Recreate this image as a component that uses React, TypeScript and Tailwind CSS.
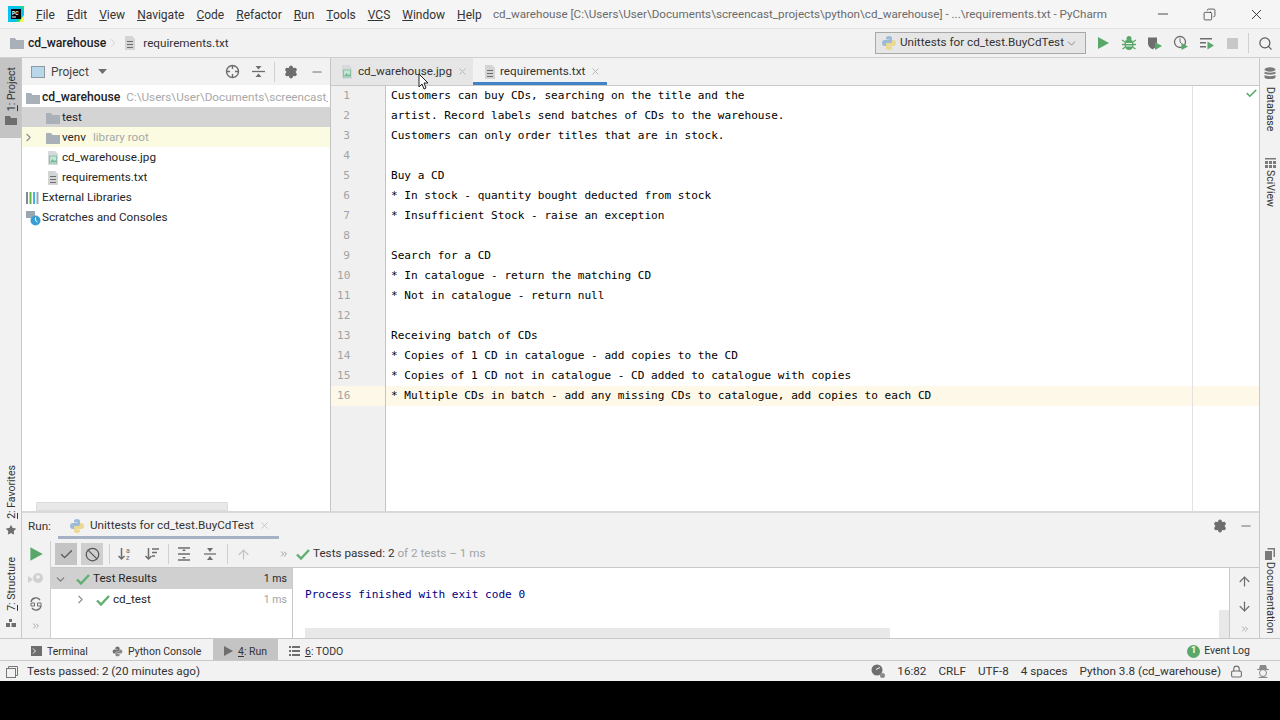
import { Minus, X, Copy, Search, ChevronDown, ChevronRight, Settings, ArrowUp, ArrowDown, ChevronsRight, Ban, Check, Star, Lock } from "lucide-react";

const ui = "font-['Roboto','Liberation_Sans',sans-serif]";
const mono = "font-['DejaVu_Sans_Mono','Liberation_Mono',monospace]";

const requirementLines = [
  "Customers can buy CDs, searching on the title and the",
  "artist. Record labels send batches of CDs to the warehouse.",
  "Customers can only order titles that are in stock.",
  "",
  "Buy a CD",
  "* In stock - quantity bought deducted from stock",
  "* Insufficient Stock - raise an exception",
  "",
  "Search for a CD",
  "* In catalogue - return the matching CD",
  "* Not in catalogue - return null",
  "",
  "Receiving batch of CDs",
  "* Copies of 1 CD in catalogue - add copies to the CD",
  "* Copies of 1 CD not in catalogue - CD added to catalogue with copies",
  "* Multiple CDs in batch - add any missing CDs to catalogue, add copies to each CD",
];

const menuItems: [string, string][] = [
  ["F", "ile"],
  ["E", "dit"],
  ["V", "iew"],
  ["N", "avigate"],
  ["C", "ode"],
  ["R", "efactor"],
  ["R", "un"],
  ["T", "ools"],
  ["VC", "S"],
  ["W", "indow"],
  ["H", "elp"],
];

function FolderIcon({ size = 16 }: { size?: number }) {
  return (
    <svg width={size} height={size} viewBox="0 0 16 16" className="shrink-0">
      <path d="M1 3h5l1.500 2H15v9H1z" fill="#aab0b8" />
    </svg>
  );
}

function TextFileIcon() {
  return (
    <svg width="16" height="16" viewBox="0 0 16 16" className="shrink-0">
      <path d="M3 1h7l3 3v11H3z" fill="#d2d4d6" />
      <path d="M5 6h6v1H5zM5 9h6v1H5zM5 12h6v1H5z" fill="#6e6e6e" />
    </svg>
  );
}

function ImageFileIcon() {
  return (
    <svg width="16" height="16" viewBox="0 0 16 16" className="shrink-0">
      <path d="M3 1h7l3 3v11H3z" fill="#d6dadb" />
      <rect x="4.500" y="6" width="7" height="7" fill="#c5e6d6" stroke="#8abfa3" />
      <path d="M5 12l2.500-3 2 2 1.500-1v2z" fill="#7cb894" />
    </svg>
  );
}

function PythonIcon() {
  return (
    <svg width="16" height="16" viewBox="0 0 16 16" className="shrink-0">
      <path d="M8 1C5.500 1 5 2 5 3v1.500h3.500V5H3.500C2 5 1 6 1 8s1 3 2.500 3H5V9.500C5 8.500 6 8 7 8h3c1 0 1-1 1-1.500V3c0-1-1-2-3-2z" fill="#9dbbd8" />
      <path d="M8 15c2.500 0 3-1 3-2v-1.500H7.500V11h5c1.500 0 2.500-1 2.500-3s-1-3-2.500-3H11v1.500C11 7.500 10 8 9 8H6c-1 0-1 1-1 1.500V13c0 1 1 2 3 2z" fill="#ecd98f" />
    </svg>
  );
}

function RunTriangle({ size = 16 }: { size?: number }) {
  return (
    <svg width={size} height={size} viewBox="0 0 16 16" className="shrink-0">
      <path d="M3 2l11 6-11 6z" fill="#59a869" />
    </svg>
  );
}

function PassCheck() {
  return (
    <svg width="14" height="12" viewBox="0 0 14 12" className="shrink-0">
      <path d="M1 6.500l4 4L13 2" fill="none" stroke="#5fb06f" strokeWidth="2.400" />
    </svg>
  );
}

function Divider({ className }: { className?: string }) {
  return <div className={`h-[20px] w-px shrink-0 bg-[#d0d0d0] ${className ?? ""}`} />;
}

function RailLabel({ num, label }: { num: string; label: string }) {
  return (
    <span className="ml-[2px] shrink-0 rotate-180 text-[10.500px] leading-[16px] text-[#333] [writing-mode:vertical-rl]">
      <u>{num}</u>
      {label}
    </span>
  );
}

function SideLabel({ label, className }: { label: string; className: string }) {
  return <span className={`shrink-0 text-[10.500px] leading-[16px] text-[#333] [writing-mode:vertical-rl] ${className}`}>{label}</span>;
}

function TreeRow({ indent, className, children }: { indent: number; className?: string; children: React.ReactNode }) {
  return (
    <div className={`flex h-[20px] items-center whitespace-nowrap pt-[1px] text-[11.700px] text-[#262626] ${className ?? ""}`} style={{ paddingLeft: indent }}>
      {children}
    </div>
  );
}

function EditorTab({ icon, name, active }: { icon: React.ReactNode; name: string; active?: boolean }) {
  return (
    <div className={`flex h-[27px] items-center text-[11.700px] text-[#333] ${active ? "w-[134px] border-b-[3px] border-[#4083c9] bg-[#f2f2f2] pl-[9px] pt-[3px]" : "w-[142px] bg-[#e6e6e6] pl-[8px]"}`}>
      {icon}
      <span className={`whitespace-nowrap pt-[1px] ${active ? "ml-[2px] w-[90px]" : "ml-[3px] w-[99px]"}`}>{name}</span>
      <X size={11} className="shrink-0 text-[#b5b5b5]" />
    </div>
  );
}

function BottomTab({ icon, num, label, className }: { icon: React.ReactNode; num?: string; label: string; className?: string }) {
  return (
    <div className={`flex h-full items-center whitespace-nowrap pt-[3px] text-[10.500px] text-[#333] ${className ?? ""}`}>
      {icon}
      <span className="ml-[5px] pt-[1px]">
        {num && <u>{num}</u>}
        {label}
      </span>
    </div>
  );
}

export default function App() {
  return (
    <div className={`relative flex h-[720px] w-[1280px] flex-col overflow-hidden bg-black ${ui}`}>
      <div className="flex h-[681px] flex-col bg-[#f2f2f2]">
        {/* title bar */}
        <div className="flex h-[29px] shrink-0 items-center border-b border-[#e2e2e2] bg-[#f5f5f5] pl-[8px] text-[12px] text-[#333]">
          <svg width="16" height="16" viewBox="0 0 16 16" className="shrink-0">
            <rect width="16" height="16" fill="#21d789" />
            <path d="M0 0h11l5 5v5L6 16H0z" fill="#07c3f2" />
            <path d="M11 16h5V9z" fill="#fcf84a" />
            <rect x="3" y="3" width="10" height="10" fill="#000" />
            <text x="4" y="8.500" fontSize="5" fontWeight="700" fill="#fff">PC</text>
            <rect x="4" y="10.500" width="4" height="1" fill="#fff" />
          </svg>
          <div className="ml-[12px] flex w-[457px] gap-[12px] whitespace-nowrap pt-[1px]">
            {menuItems.map(([head, rest], i) => (
              <span key={i}>
                <u>{head}</u>
                {rest}
              </span>
            ))}
          </div>
          <span className="whitespace-nowrap pt-[1px] text-[11.650px] text-[#6b6b6b]">
            cd_warehouse [C:\Users\User\Documents\screencast_projects\python\cd_warehouse] - ...\requirements.txt - PyCharm
          </span>
          <div className="ml-auto flex items-center gap-[32px] pr-[15px] text-[#222]">
            <Minus size={16} strokeWidth={1.200} />
            <Copy size={13} strokeWidth={1.300} className="-scale-x-100" />
            <X size={17} strokeWidth={1.200} />
          </div>
        </div>

        {/* navigation bar */}
        <div className="flex h-[29px] shrink-0 items-center border-b border-[#cfcfcf] pl-[9px] text-[11.700px] text-[#333]">
          <FolderIcon />
          <span className="ml-[3px] text-[12.200px] font-medium text-[#222]">cd_warehouse</span>
          <ChevronRight size={14} strokeWidth={1} className="text-[#c0c0c0]" />
          <span className="ml-[2px]">
            <TextFileIcon />
          </span>
          <span className="ml-[5px] pt-[2px]">requirements.txt</span>
          <div className="ml-auto flex items-center pr-[7px]">
            <div className="flex h-[22px] w-[211px] items-center border border-[#a8a8a8] bg-[#e6e6e6] pl-[5px] pr-[4px]">
              <PythonIcon />
              <span className="ml-[3px] whitespace-nowrap">Unittests for cd_test.BuyCdTest</span>
              <ChevronDown size={13} strokeWidth={1.200} className="ml-auto mr-[3px] text-[#555]" />
            </div>
            <div className="ml-[9px] flex items-center gap-[10px]">
              <RunTriangle />
              <svg width="16" height="16" viewBox="0 0 16 16">
                <ellipse cx="8" cy="9.500" rx="4.500" ry="5.500" fill="#59a869" />
                <circle cx="8" cy="3.500" r="2.500" fill="#59a869" />
                <path d="M1 5l3 2M15 5l-3 2M1 9.500h3M15 9.500h-3M1.500 14l3-2M14.500 14l-3-2" stroke="#59a869" strokeWidth="1.300" />
                <path d="M5 8.500h6M5 11h6" stroke="#f2f2f2" />
              </svg>
              <svg width="16" height="16" viewBox="0 0 16 16">
                <path d="M1 2.500h9v6c0 3-3 5-4.500 6C4 13.500 1 11.500 1 8.500z" fill="#6e6e6e" />
                <path d="M8 7l7 4-7 4z" fill="#59a869" />
              </svg>
              <svg width="16" height="16" viewBox="0 0 16 16">
                <circle cx="7" cy="7" r="5.500" fill="none" stroke="#6e6e6e" strokeWidth="1.300" />
                <path d="M7 3.500V7l2 2" fill="none" stroke="#6e6e6e" />
                <path d="M8.500 8l6.500 3.500-6.500 3.500z" fill="#59a869" />
              </svg>
              <svg width="16" height="16" viewBox="0 0 16 16">
                <path d="M1 3h12v1.500H1zM1 7h6v1.500H1zM1 11h6v1.500H1z" fill="#6e6e6e" />
                <path d="M8.500 6.500l6.500 4-6.500 4z" fill="#59a869" />
              </svg>
              <div className="mx-[2px] h-[11px] w-[11px] bg-[#c8c8c8]" />
            </div>
            <Divider className="ml-[8px] mr-[9px]" />
            <Search size={15} strokeWidth={2} className="text-[#5a5a5a]" />
          </div>
        </div>

        {/* workspace */}
        <div className="flex min-h-0 flex-1">
          {/* left rail */}
          <div className="flex w-[22px] shrink-0 flex-col items-center border-r border-[#c9c9c9]">
            <div className="flex h-[80px] w-full shrink-0 flex-col items-center gap-[5px] bg-[#c4c4c4] pt-[9px]">
              <RailLabel num="1" label=": Project" />
              <svg width="12" height="9" viewBox="0 0 12 9" className="shrink-0">
                <path d="M0 0h5l1 2h6v7H0z" fill="#6e6e6e" />
              </svg>
            </div>
            <div className="mt-[327px] flex shrink-0 flex-col items-center gap-[5px]">
              <RailLabel num="2" label=": Favorites" />
              <Star size={12} fill="#6e6e6e" strokeWidth={0} className="shrink-0" />
            </div>
            <div className="mt-[21px] flex shrink-0 flex-col items-center gap-[8px]">
              <RailLabel num="7" label=": Structure" />
              <svg width="10" height="8" viewBox="0 0 10 8" className="shrink-0">
                <path d="M3 0h3v3H3zM0 4h4v4H0zM5.500 4H10v4H5.500z" fill="#6e6e6e" />
              </svg>
            </div>
          </div>

          {/* center */}
          <div className="flex min-w-0 flex-1 flex-col">
            <div className="flex h-[453px] shrink-0">
              {/* project tool window */}
              <div className="flex w-[309px] shrink-0 flex-col border-r border-[#c4c4c4] bg-white">
                <div className="flex h-[27px] shrink-0 items-center bg-[#f2f2f2] pl-[9px] pr-[6px] text-[12px] text-[#444]">
                  <svg width="14" height="14" viewBox="0 0 14 14">
                    <rect x="0.500" y="1.500" width="13" height="11" fill="#b9d7ea" stroke="#8e9aa3" />
                  </svg>
                  <span className="ml-[6px]">Project</span>
                  <svg width="9" height="5" viewBox="0 0 9 5" className="ml-[9px]">
                    <path d="M0 0h9L4.500 5z" fill="#6e6e6e" />
                  </svg>
                  <div className="ml-auto flex items-center text-[#6e6e6e]">
                    <svg width="15" height="15" viewBox="0 0 15 15">
                      <circle cx="7.500" cy="7.500" r="6" fill="none" stroke="#6e6e6e" strokeWidth="1.400" />
                      <path d="M7.500 1v4M7.500 10v4M1 7.500h4M10 7.500h4" stroke="#6e6e6e" strokeWidth="1.400" />
                    </svg>
                    <svg width="13" height="13" viewBox="0 0 13 13" className="ml-[12px]">
                      <path d="M0 6.500h13" stroke="#6e6e6e" strokeWidth="1.300" />
                      <path d="M3.500 1h6L6.500 4.500zM3.500 12h6L6.500 8.500z" fill="#6e6e6e" />
                    </svg>
                    <Divider className="ml-[9px]" />
                    <Settings size={14} fill="#6e6e6e" strokeWidth={2} className="ml-[9px]" />
                    <Minus size={14} strokeWidth={2} className="ml-[12px]" />
                  </div>
                </div>
                <div className="relative min-h-0 flex-1 pt-[2px]">
                  <TreeRow indent={3}>
                    <FolderIcon />
                    <span className="ml-[1px] text-[12.200px] font-medium text-[#222]">cd_warehouse</span>
                    <span className="ml-[6px] w-[202px] overflow-hidden text-[#a8a8a8]">C:\Users\User\Documents\screencast_p</span>
                  </TreeRow>
                  <TreeRow indent={23} className="bg-[#d4d4d4]">
                    <FolderIcon />
                    <span className="ml-[1px]">test</span>
                  </TreeRow>
                  <TreeRow indent={0} className="bg-[#fbfbe2]">
                    <ChevronRight size={13} strokeWidth={2} className="mr-[10px] text-[#8c8c8c]" />
                    <FolderIcon />
                    <span className="ml-[1px]">venv</span>
                    <span className="ml-[7px] text-[#a8a8a8]">library root</span>
                  </TreeRow>
                  <TreeRow indent={23}>
                    <ImageFileIcon />
                    <span className="ml-[1px]">cd_warehouse.jpg</span>
                  </TreeRow>
                  <TreeRow indent={23}>
                    <TextFileIcon />
                    <span className="ml-[1px]">requirements.txt</span>
                  </TreeRow>
                  <TreeRow indent={3}>
                    <svg width="16" height="14" viewBox="0 0 16 14" className="shrink-0">
                      <path d="M1 1h2v12H1z" fill="#7f8b91" />
                      <path d="M4.500 1h2v12h-2z" fill="#62b543" />
                      <path d="M8 1h2v12H8z" fill="#40b6e0" />
                      <path d="M11.500 1h2v12h-2z" fill="#9aa7b0" />
                    </svg>
                    <span className="ml-[1px]">External Libraries</span>
                  </TreeRow>
                  <TreeRow indent={3}>
                    <svg width="16" height="16" viewBox="0 0 16 16" className="shrink-0">
                      <path d="M1 1h9v7H1z" fill="#9aa7b0" />
                      <circle cx="10.500" cy="10.500" r="5" fill="#389fd6" />
                      <path d="M10.500 7.500v3l2 1.500" fill="none" stroke="#fff" />
                    </svg>
                    <span className="ml-[1px]">Scratches and Consoles</span>
                  </TreeRow>
                  <div className="absolute bottom-0 left-[14px] h-[9px] w-[192px] border border-[#dcdcdc] bg-[#e8e8e8]" />
                </div>
              </div>

              {/* editor */}
              <div className="flex min-w-0 flex-1 flex-col">
                <div className="flex h-[28px] shrink-0 border-b border-[#c9c9c9]">
                  <EditorTab icon={<ImageFileIcon />} name="cd_warehouse.jpg" />
                  <EditorTab icon={<TextFileIcon />} name="requirements.txt" active />
                </div>
                <div className="flex min-h-0 flex-1 bg-white">
                  <div className={`w-[55px] shrink-0 border-r border-[#c4c4c4] bg-[#f0f0f0] text-[11.080px] leading-[20px] text-[#a3a3a3] ${mono}`}>
                    {requirementLines.map((_, i) => (
                      <div key={i} className={`h-[20px] pl-[6px] ${i === 15 ? "bg-[#fdf8e8]" : ""}`}>
                        <span className="inline-block w-[13px] text-right">{i + 1}</span>
                      </div>
                    ))}
                  </div>
                  <div className={`relative min-w-0 flex-1 text-[11.080px] leading-[20px] text-black ${mono}`}>
                    {requirementLines.map((line, i) => (
                      <div key={i} className={`h-[20px] whitespace-pre pl-[5px] ${i === 15 ? "bg-[#fdf8e8]" : ""}`}>
                        {line}
                      </div>
                    ))}
                    <div className="absolute bottom-0 left-[806px] top-0 w-px bg-[#e2e2e2]" />
                    <Check size={13} strokeWidth={3} className="absolute right-[1px] top-[1px] text-[#59a869]" />
                  </div>
                </div>
              </div>
            </div>

            {/* run tool window */}
            <div className="flex h-[127px] shrink-0 flex-col border-t-[2px] border-[#d9d9d9]">
              <div className="flex h-[28px] shrink-0 items-start pl-[6px] pr-[6px] text-[11.700px] text-[#333]">
                <span className="mt-[5px]">Run:</span>
                <div className="ml-[7px] flex h-[26px] w-[221px] items-center border-b-[3px] border-[#a5b2c4] pl-[11px] pt-[2px]">
                  <PythonIcon />
                  <span className="ml-[5px] whitespace-nowrap">Unittests for cd_test.BuyCdTest</span>
                  <X size={11} className="ml-[5px] text-[#c2c2c2]" />
                </div>
                <div className="ml-auto mt-[6px] flex items-center gap-[12px] text-[#6e6e6e]">
                  <Settings size={14} fill="#6e6e6e" />
                  <Minus size={14} strokeWidth={2} />
                </div>
              </div>
              <div className="flex min-h-0 flex-1">
                <div className="flex w-[29px] shrink-0 flex-col items-center gap-[9px] border-r border-[#d0d0d0] pt-[4px] text-[#8a8a8a]">
                  <RunTriangle size={18} />
                  <svg width="16" height="15" viewBox="0 0 16 15" className="shrink-0">
                    <path d="M0 4l5 3.500L0 11z" fill="#d0d0d0" />
                    <circle cx="10" cy="6" r="5" fill="#d0d0d0" />
                    <circle cx="10" cy="5" r="1.800" fill="#f2f2f2" />
                  </svg>
                  <svg width="16" height="16" viewBox="0 0 16 16" className="shrink-0">
                    <path d="M3 6a5 5 0 0 1 9-2M13 10a5 5 0 0 1-9 2" fill="none" stroke="#6e6e6e" strokeWidth="1.300" />
                    <path d="M3 7h3.500v3H3zM9.500 7H13v3H9.500z" fill="none" stroke="#6e6e6e" />
                  </svg>
                  <ChevronsRight size={10} className="shrink-0 text-[#999]" />
                </div>
                <div className="flex min-w-0 flex-1 flex-col">
                  <div className="flex h-[27px] shrink-0 items-center border-b border-[#c9c9c9] pl-[4px] text-[11.700px]">
                    <div className="flex h-[22px] w-[22px] items-center justify-center bg-[#c4c4c4]">
                      <Check size={15} strokeWidth={2} className="text-[#555]" />
                    </div>
                    <div className="ml-[4px] flex h-[22px] w-[22px] items-center justify-center bg-[#cfcfcf]">
                      <Ban size={15} strokeWidth={2} className="text-[#555]" />
                    </div>
                    <Divider className="ml-[6px]" />
                    <div className="ml-[7px] flex items-center gap-[11px]">
                      <svg width="16" height="16" viewBox="0 0 16 16">
                        <path d="M4.500 2v11M1.500 10l3 3 3-3" fill="none" stroke="#6e6e6e" strokeWidth="1.500" />
                        <text x="9" y="7" fontSize="7" fill="#6e6e6e">a</text>
                        <text x="9" y="14" fontSize="7" fill="#6e6e6e">z</text>
                      </svg>
                      <svg width="16" height="16" viewBox="0 0 16 16">
                        <path d="M4.500 2v11M1.500 10l3 3 3-3" fill="none" stroke="#6e6e6e" strokeWidth="1.500" />
                        <path d="M8 3h7M8 6.500h5M8 10h3" stroke="#6e6e6e" strokeWidth="1.300" />
                      </svg>
                    </div>
                    <Divider className="ml-[8px]" />
                    <div className="ml-[7px] flex items-center gap-[10px]">
                      <svg width="16" height="16" viewBox="0 0 16 16">
                        <path d="M2 2h12M2 14h12M2 8h12" stroke="#6e6e6e" strokeWidth="1.300" />
                        <path d="M6 5h4L8 3zM6 11h4l-2 2z" fill="#6e6e6e" />
                      </svg>
                      <svg width="16" height="16" viewBox="0 0 16 16">
                        <path d="M2 8h12" stroke="#6e6e6e" strokeWidth="1.300" />
                        <path d="M5 2h6L8 6zM5 14h6l-3-4z" fill="#6e6e6e" />
                      </svg>
                    </div>
                    <Divider className="ml-[9px]" />
                    <ArrowUp size={15} strokeWidth={2} className="ml-[8px] text-[#c4c4c4]" />
                    <ChevronsRight size={10} className="ml-[28px] text-[#888]" />
                    <div className="ml-[7px] flex items-center gap-[3px] whitespace-nowrap text-[#333]">
                      <PassCheck />
                      <span>
                        Tests passed: 2 <span className="text-[#a3a3a3]">of 2 tests – 1 ms</span>
                      </span>
                    </div>
                  </div>
                  <div className="flex min-h-0 flex-1">
                    <div className="w-[242px] shrink-0 border-r border-[#c9c9c9] bg-white text-[11.700px]">
                      <div className="flex h-[21px] items-center bg-[#d0d0d0] pl-[3px] pr-[5px] pt-[1px] text-[#262626]">
                        <ChevronDown size={13} strokeWidth={2} className="text-[#777]" />
                        <span className="ml-[9px]">
                          <PassCheck />
                        </span>
                        <span className="ml-[3px]">Test Results</span>
                        <span className="ml-auto text-[10.500px]">1 ms</span>
                      </div>
                      <div className="flex h-[20px] items-center pl-[23px] pr-[5px] pt-[1px] text-[#262626]">
                        <ChevronRight size={13} strokeWidth={2} className="text-[#8c8c8c]" />
                        <span className="ml-[9px]">
                          <PassCheck />
                        </span>
                        <span className="ml-[3px]">cd_test</span>
                        <span className="ml-auto text-[10.500px] text-[#a3a3a3]">1 ms</span>
                      </div>
                    </div>
                    <div className={`relative min-w-0 flex-1 bg-white pl-[12px] pt-[17px] text-[11.080px] leading-[20px] text-[#000080] ${mono}`}>
                      Process finished with exit code 0
                      <div className="absolute bottom-0 left-[12px] h-[10px] w-[585px] bg-[#e8e8e8]" />
                      <div className="absolute bottom-0 right-0 h-[28px] w-[10px] bg-[#e8e8e8]" />
                    </div>
                    <div className="flex w-[30px] shrink-0 flex-col items-center gap-[10px] border-l border-[#c9c9c9] pt-[6px] text-[#6e6e6e]">
                      <ArrowUp size={15} strokeWidth={2} className="shrink-0" />
                      <ArrowDown size={15} strokeWidth={2} className="shrink-0" />
                      <ChevronsRight size={10} className="shrink-0 text-[#999]" />
                    </div>
                  </div>
                </div>
              </div>
            </div>
          </div>

          {/* right rail */}
          <div className="flex w-[21px] shrink-0 flex-col items-center border-l border-[#c9c9c9] pt-[9px]">
            <svg width="12" height="13" viewBox="0 0 12 13" className="shrink-0">
              <ellipse cx="6" cy="2.500" rx="5.500" ry="2.200" fill="#7a7a7a" />
              <path d="M.5 4.500c1 1.500 10 1.500 11 0v2c-1 1.500-10 1.500-11 0zM.5 8c1 1.500 10 1.500 11 0v2.500c-1 2-10 2-11 0z" fill="#7a7a7a" />
            </svg>
            <SideLabel label="Database" className="mt-[7px]" />
            <svg width="11" height="10" viewBox="0 0 11 10" className="mt-[27px] shrink-0">
              <path d="M0 0h11v1.500H0zM0 3h3v3H0zM4 3h3v3H4zM8 3h3v3H8zM0 7h3v3H0zM4 7h3v3H4zM8 7h3v3H8z" fill="#7a7a7a" />
            </svg>
            <SideLabel label="SciView" className="mt-[2px]" />
            <svg width="10" height="12" viewBox="0 0 10 12" className="mt-[341px] shrink-0">
              <path d="M2.500 0H10v9H8.500V1.500h-6zM0 3h7v9H0z" fill="#7a7a7a" />
            </svg>
            <SideLabel label="Documentation" className="mt-[2px]" />
          </div>
        </div>

        {/* tool window bar */}
        <div className="flex h-[23px] shrink-0 items-center border-y border-[#c9c9c9] pr-[30px]">
          <BottomTab
            className="ml-[31px] w-[81px]"
            icon={
              <svg width="11" height="10" viewBox="0 0 11 10">
                <rect width="11" height="10" fill="#6e6e6e" />
                <path d="M2 2.500L4.500 5 2 7.500" fill="none" stroke="#f2f2f2" />
              </svg>
            }
            label="Terminal"
          />
          <BottomTab
            className="w-[101px]"
            icon={
              <svg width="11" height="11" viewBox="0 0 16 16">
                <path d="M8 1C5.500 1 5 2 5 3v1.500h3.500V5H3.500C2 5 1 6 1 8s1 3 2.500 3H5V9.500C5 8.500 6 8 7 8h3c1 0 1-1 1-1.500V3c0-1-1-2-3-2z" fill="#6e6e6e" />
                <path d="M8 15c2.500 0 3-1 3-2v-1.500H7.500V11h5c1.500 0 2.500-1 2.500-3s-1-3-2.500-3H11v1.500C11 7.500 10 8 9 8H6c-1 0-1 1-1 1.500V13c0 1 1 2 3 2z" fill="#8a8a8a" />
              </svg>
            }
            label="Python Console"
          />
          <BottomTab
            className="w-[65px] bg-[#c4c4c4] pl-[11px]"
            icon={
              <svg width="9" height="10" viewBox="0 0 9 10">
                <path d="M0 0l9 5-9 5z" fill="#6e6e6e" />
              </svg>
            }
            num="4"
            label=": Run"
          />
          <BottomTab
            className="ml-[11px]"
            icon={
              <svg width="11" height="10" viewBox="0 0 11 10">
                <path d="M0 0h2v2H0zM3 0h8v2H3zM0 4h2v2H0zM3 4h8v2H3zM0 8h2v2H0zM3 8h8v2H3z" fill="#6e6e6e" />
              </svg>
            }
            num="6"
            label=": TODO"
          />
          <div className="ml-auto flex items-center gap-[4px] pt-[3px] text-[10.500px] text-[#333]">
            <span className="flex h-[13px] w-[13px] items-center justify-center rounded-full bg-[#59a869] text-[9px] font-bold text-white">1</span>
            Event Log
          </div>
        </div>

        {/* status bar */}
        <div className="flex h-[20px] shrink-0 items-center pl-[6px] pr-[10px] pt-[1px] text-[11.700px] text-[#333]">
          <svg width="12" height="12" viewBox="0 0 12 12" className="shrink-0">
            <rect x="0.500" y="2.500" width="9" height="9" fill="none" stroke="#777" />
            <path d="M2.500 2.500V.5h9v9H9.500" fill="none" stroke="#777" />
          </svg>
          <span className="ml-[9px]">Tests passed: 2 (20 minutes ago)</span>
          <div className="ml-auto flex items-center whitespace-nowrap">
            <svg width="16" height="16" viewBox="0 0 16 16">
              <circle cx="7" cy="7" r="5.500" fill="#6e6e6e" />
              <path d="M6 6.500l4-2" stroke="#f2f2f2" />
              <circle cx="12.500" cy="12.500" r="2.500" fill="#8a8a8a" />
            </svg>
            <span className="ml-[11px]">16:82</span>
            <span className="ml-[12px]">CRLF</span>
            <span className="ml-[12px]">UTF-8</span>
            <span className="ml-[12px]">4 spaces</span>
            <span className="ml-[12px]">Python 3.8 (cd_warehouse)</span>
            <Lock size={13} strokeWidth={2} className="ml-[9px] text-[#6e6e6e]" />
            <svg width="14" height="14" viewBox="0 0 14 14" className="ml-[13px]">
              <path d="M3 5l1-4h6l1 4h2v1H1V5z" fill="#8a8a8a" />
              <circle cx="7" cy="9" r="3.500" fill="none" stroke="#8a8a8a" />
              <path d="M2 14c1-2 9-2 10 0z" fill="#8a8a8a" />
            </svg>
          </div>
        </div>
      </div>

      {/* mouse pointer */}
      <svg width="11" height="17" viewBox="0 0 11 17" className="absolute left-[418px] top-[73px]">
        <path d="M1 1v13l3-3 2 5 2-1-2-5h4z" fill="#fff" stroke="#222" />
      </svg>
    </div>
  );
}
